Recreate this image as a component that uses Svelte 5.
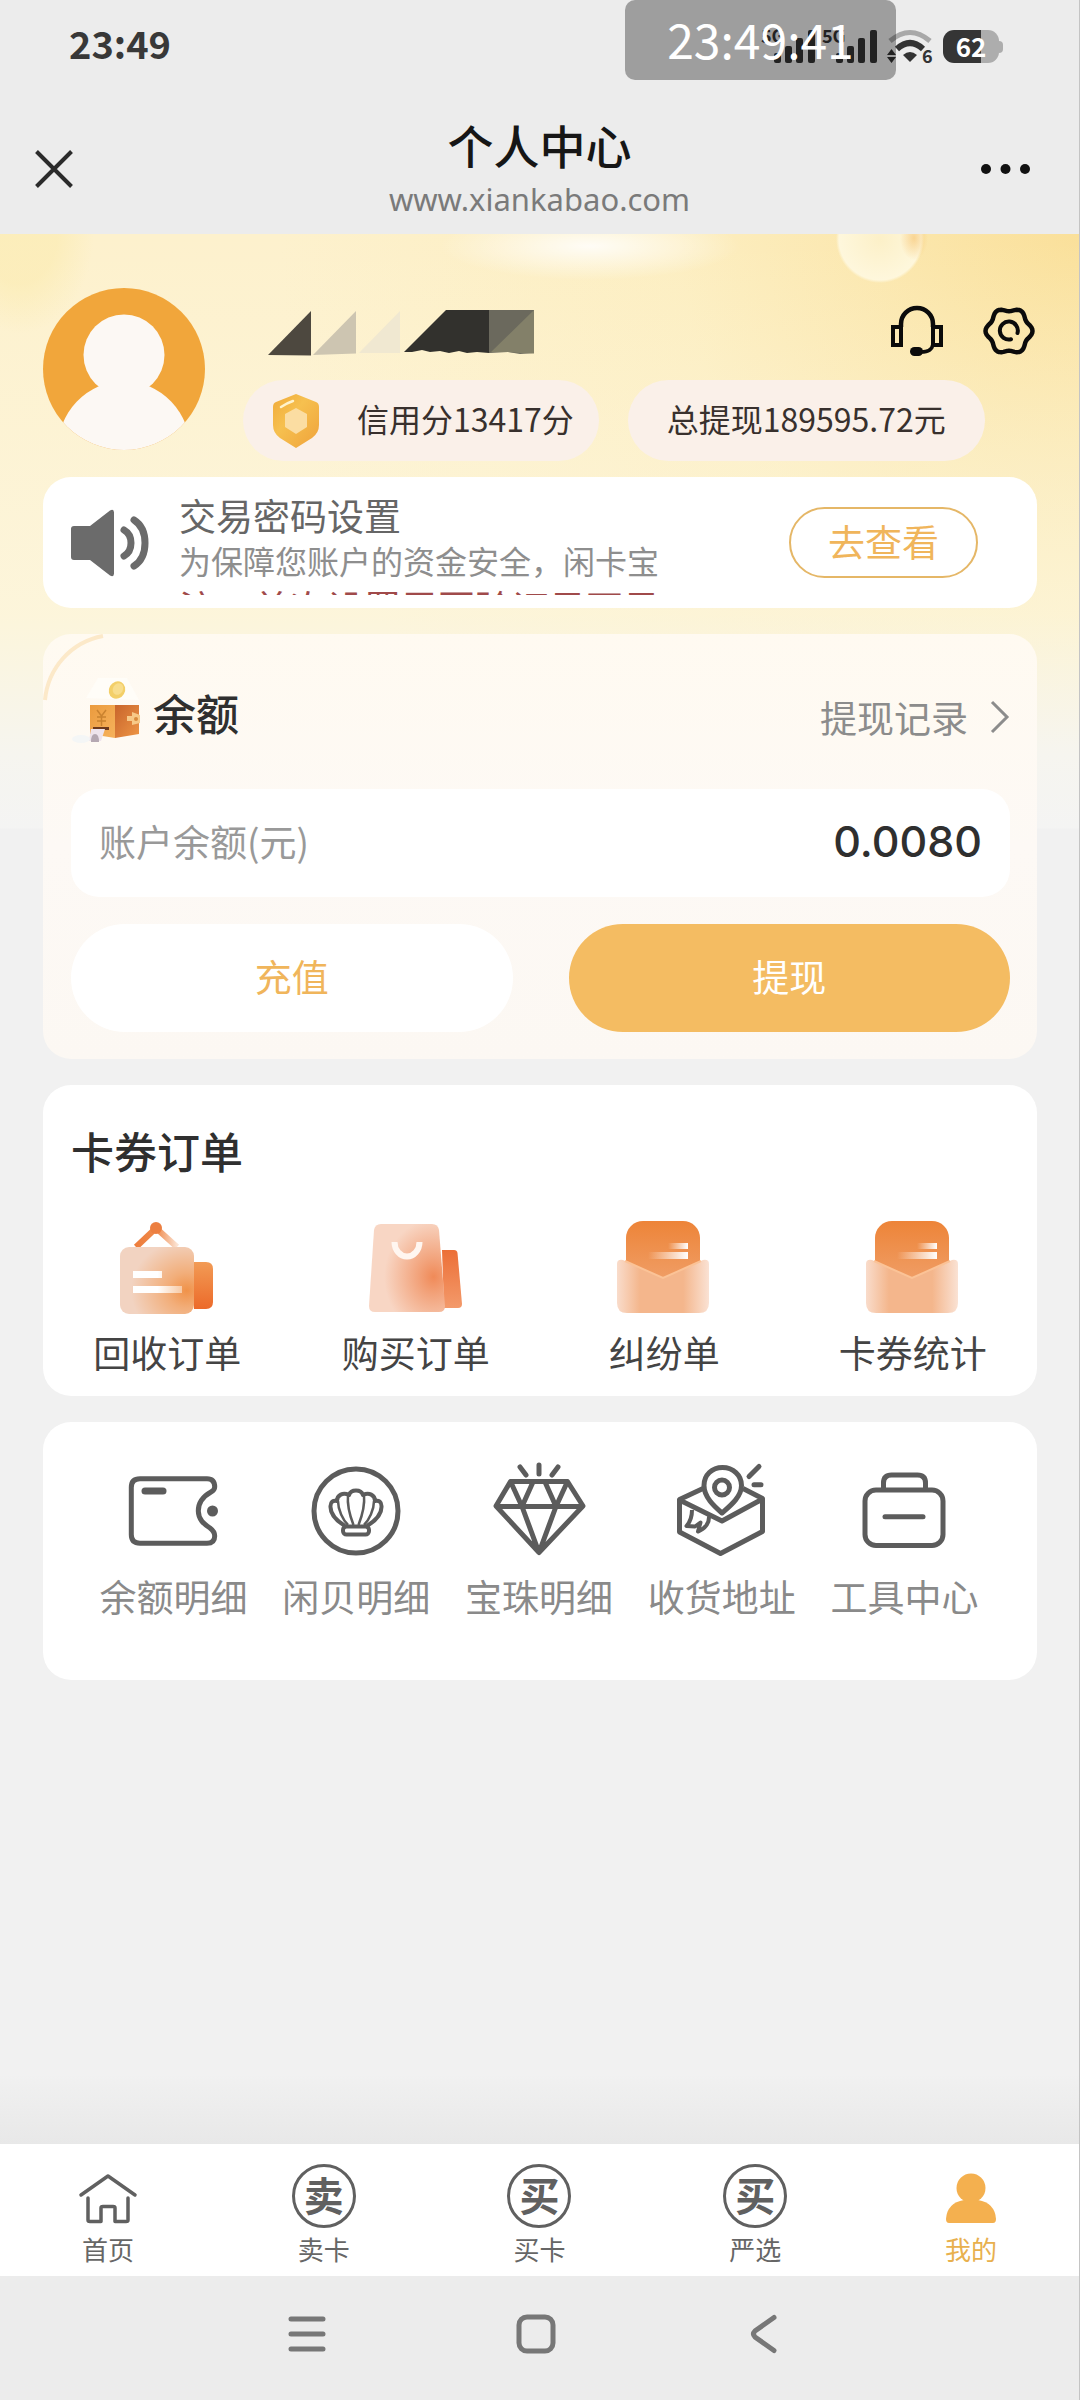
<script>
  const tools = [
    { id: 'wallet', label: '余额明细' },
    { id: 'shell', label: '闲贝明细' },
    { id: 'diamond', label: '宝珠明细' },
    { id: 'parcel', label: '收货地址' },
    { id: 'toolbox', label: '工具中心' }
  ];
  const orders = [
    { id: 'recycle', label: '回收订单' },
    { id: 'bag', label: '购买订单' },
    { id: 'letter', label: '纠纷单' },
    { id: 'letter', label: '卡券统计' }
  ];
  const tabs = [
    { id: 'home', label: '首页' },
    { id: 'glyph', glyph: '卖', label: '卖卡' },
    { id: 'glyph', glyph: '买', label: '买卡' },
    { id: 'glyph', glyph: '买', label: '严选' },
    { id: 'me', label: '我的', active: true }
  ];

  // six-lobed outline of the settings gear
  const gear =
    'M' +
    Array.from({ length: 72 }, (_, i) => {
      const t = (i / 72) * Math.PI * 2;
      const r = 21.6 + 1.9 * Math.cos(6 * t);
      return `${(26 + r * Math.cos(t)).toFixed(2)} ${(25 + r * Math.sin(t)).toFixed(2)}`;
    }).join('L') +
    'Z';
</script>

<div class="app">
  <header>
    <div class="status">
      <span class="time">23:49</span>
      <div class="indicators">
        <svg width="116" height="36" viewBox="0 0 116 36" fill="#333">
          <text x="0" y="15" class="net">5G</text>
          <text x="61" y="15" class="net">5G</text>
          <rect x="13" y="25" width="7" height="10" rx="2" /><rect x="24" y="18" width="7" height="17" rx="2" />
          <rect x="35" y="10" width="7" height="25" rx="2" /><rect x="47" y="2" width="7" height="33" rx="2" />
          <rect x="75" y="25" width="7" height="10" rx="2" /><rect x="86" y="18" width="7" height="17" rx="2" />
          <rect x="97" y="10" width="7" height="25" rx="2" /><rect x="109" y="2" width="7" height="33" rx="2" />
        </svg>
        <svg width="46" height="36" viewBox="0 0 46 36" fill="none">
          <path d="M0 27l4.500-6 4.500 6zM0 29l4.500 6 4.500-6z" fill="#333" />
          <path d="M3 13Q23-4 43 13" stroke="#a8a8a8" stroke-width="5" />
          <path d="M10 21Q23 9 36 21" stroke="#333" stroke-width="6" />
          <path d="M16 27q7-6 14 0l-7 7z" fill="#333" />
          <text x="35" y="35" class="six" fill="#333">6</text>
        </svg>
        <div class="battery"><span>62</span></div>
      </div>
      <div class="clock">23:49:41</div>
    </div>
    <div class="titlebar">
      <button class="bare" aria-label="关闭">
        <svg width="38" height="38" viewBox="0 0 38 38"><path d="M1.500 1.500l35 35M36.500 1.500l-35 35" stroke="#2b2b2b" stroke-width="4" /></svg>
      </button>
      <div class="titles">
        <h1>个人中心</h1>
        <p>www.xiankabao.com</p>
      </div>
      <button class="bare more" aria-label="更多">
        <svg width="49" height="38" viewBox="0 0 49 38" fill="#111"><circle cx="5" cy="19" r="5" /><circle cx="24.500" cy="19" r="5" /><circle cx="44" cy="19" r="5" /></svg>
      </button>
    </div>
  </header>

  <main>
    <section class="profile">
      <svg class="avatar" width="162" height="162" viewBox="0 0 162 162">
        <defs><clipPath id="av"><circle cx="81" cy="81" r="81" /></clipPath></defs>
        <g clip-path="url(#av)">
          <rect width="162" height="162" fill="#f1a63b" />
          <circle cx="81" cy="67" r="40.500" fill="#fcf8f4" />
          <ellipse cx="81" cy="164" rx="67" ry="71" fill="#fcf8f4" />
        </g>
      </svg>
      <div class="who">
        <div class="namerow">
          <svg width="267" height="46" viewBox="0 0 267 46">
            <path d="M0 45L43 1v44.500z" fill="#4d483f" />
            <path d="M45 45L88 1v42.500z" fill="#cdc5b1" />
            <path d="M91 43L132 1v42z" fill="#f0e8d1" />
            <path d="M136 42L178 0h43v43l-12-1-10 1-8-2-10 2-9-2-10 1-8-2-10 2z" fill="#32312d" />
            <path d="M221 0h45v43l-14 1-12-2-19 1z" fill="#6b695d" />
            <path d="M223 42L266 0v43.500l-14-.500-12-1z" fill="#838069" />
          </svg>
          <div class="actions">
            <button class="bare" aria-label="客服">
              <svg width="54" height="50" viewBox="0 0 54 50" fill="none" stroke="#0b0b0b" stroke-width="4.500">
                <path d="M11 21v-3a16 16 0 0 1 32 0v3" />
                <rect x="3" y="21" width="8" height="18" stroke-width="4" /><rect x="43" y="21" width="8" height="18" stroke-width="4" />
                <path d="M43 38q-1 8-12 8" stroke-width="3.500" />
                <rect x="20" y="41" width="13" height="9" rx="4.500" fill="#0b0b0b" stroke="none" />
              </svg>
            </button>
            <button class="bare" aria-label="设置">
              <svg width="52" height="50" viewBox="0 0 52 50" fill="none" stroke="#0b0b0b" stroke-width="4.500" stroke-linecap="round">
                <path d={gear} stroke-linejoin="round" />
                <path d="M34.500 27A9 9 0 1 0 28 33.300" stroke-width="4" />
              </svg>
            </button>
          </div>
        </div>
        <div class="badges">
          <span class="badge">
            <svg width="46" height="54" viewBox="0 0 46 54">
              <defs><linearGradient id="sh" x1="0" y1="0" x2="1" y2="1"><stop offset="0" stop-color="#f0aa38" /><stop offset=".4" stop-color="#f6c04f" /><stop offset="1" stop-color="#efa23a" /></linearGradient></defs>
              <path d="M23 0l20 8q3 1 3 5v18q0 8-7 13L23 54 7 44q-7-5-7-13V13q0-4 3-5z" fill="url(#sh)" />
              <path d="M8 13q6-4 12-6" stroke="#fff3cc" stroke-width="2.500" stroke-linecap="round" fill="none" />
              <path d="M23 14l11 6v13l-11 7-11-7V20z" fill="#fbdda2" />
            </svg>
            <span class="score">信用分13417分</span>
          </span>
          <span class="badge total"><span class="score">总提现189595.72元</span></span>
        </div>
      </div>
    </section>

    <section class="card notice">
      <svg width="78" height="68" viewBox="0 0 78 68" fill="none" stroke="#6b6b6b" stroke-linecap="round">
        <path d="M3 17h16L39 1.500q4-2 4 2v61q0 4-4 2L19 51H3q-3 0-3-3V20q0-3 3-3z" fill="#6b6b6b" stroke="none" />
        <path d="M53 21q7 4 7 13t-7 13" stroke-width="7" />
        <path d="M63 11q11 7 11 23T63 57" stroke-width="7" />
      </svg>
      <div class="message">
        <h2>交易密码设置</h2>
        <p>为保障您账户的资金安全，闲卡宝</p>
        <p class="warn">注：首次设置需要验证是否是</p>
      </div>
      <button class="view">去查看</button>
    </section>

    <section class="card balance">
      <svg class="arc" width="62" height="68" viewBox="0 0 62 68" fill="none"><path d="M2 66C5 34 28 8 60 2" stroke="#fce9c9" stroke-width="4" /></svg>
      <div class="balance-head">
        <div class="balance-name">
          <svg width="74" height="68" viewBox="0 0 74 68">
            <defs>
              <linearGradient id="wf" x1="0" y1="0" x2="1" y2="1"><stop offset="0" stop-color="#eb9b3e" /><stop offset="1" stop-color="#f6b25c" /></linearGradient>
              <linearGradient id="wr" x1="0" y1="0" x2="1" y2="1"><stop offset="0" stop-color="#c8642b" /><stop offset="1" stop-color="#ee9646" /></linearGradient>
            </defs>
            <path d="M15 20L27 0h29l12 22z" fill="#fffdf8" />
            <ellipse cx="46" cy="12" rx="8" ry="9" transform="rotate(30 46 12)" fill="#f3cf68" />
            <ellipse cx="47" cy="11" rx="5" ry="6" transform="rotate(30 47 11)" fill="#f8dd8c" />
            <path d="M19 27h25v33l-25-4z" fill="url(#wf)" />
            <path d="M44 27h24v29l-24 4z" fill="url(#wr)" />
            <path d="M26 32l4.500 6 4.500-6M30.500 38v10M26 39h9M26 43h9" stroke="#c9822f" stroke-width="1.500" fill="none" />
            <path d="M22 49h16v3H22z" fill="#6e3a1c" />
            <path d="M20 51h14l-4 12H18z" fill="#eee4ec" />
            <path d="M20 64q0-8 4-8t4 8z" fill="#b5a8b2" />
            <ellipse cx="10" cy="61" rx="9" ry="4" fill="#f4f6f6" />
            <path d="M56 38h5v-4l8 3v8l-8 2v-4h-5z" fill="#f7c987" />
            <circle cx="65" cy="41" r="2" fill="#d98b3c" />
          </svg>
          <h2>余额</h2>
        </div>
        <a href="#records">提现记录
          <svg width="20" height="34" viewBox="0 0 20 34" fill="none"><path d="M2 2l15 15L2 32" stroke="#8c8c8c" stroke-width="3" /></svg>
        </a>
      </div>
      <div class="amount"><span>账户余额(元)</span><strong>0.0080</strong></div>
      <div class="buttons">
        <button class="light">充值</button>
        <button class="solid">提现</button>
      </div>
    </section>

    <section class="card orders">
      <h2>卡券订单</h2>
      <div class="grid four">
        {#each orders as item, i}
          <a href="#order{i}">
            <svg width="96" height="96" viewBox="0 0 96 96">
              {#if item.id === 'recycle'}
                <defs>
                  <linearGradient id="r1" x1="0" y1="0" x2="0" y2="1"><stop offset="0" stop-color="#f29b55" /><stop offset="1" stop-color="#ec6a2a" /></linearGradient>
                  <radialGradient id="r2" cx=".9" cy=".65" r=".75"><stop offset="0" stop-color="#f09249" /><stop offset=".35" stop-color="#f2ae7a" /><stop offset="1" stop-color="#f2d3c1" /></radialGradient>
                  <linearGradient id="r3"><stop offset="0" stop-color="#fff" /><stop offset=".5" stop-color="#fff" /><stop offset="1" stop-color="#f7c9a4" /></linearGradient>
                  <linearGradient id="r4"><stop offset="0" stop-color="#ed7d3c" /><stop offset=".5" stop-color="#ef8a4c" /><stop offset="1" stop-color="#fbe3d3" /></linearGradient>
                </defs>
                <path d="M17 27L37 8l21 19" fill="none" stroke="url(#r4)" stroke-width="6" />
                <circle cx="37" cy="8" r="6" fill="#ec7f41" />
                <path d="M75 42h12q7 0 7 7v33q0 7-7 7H75z" fill="url(#r1)" />
                <rect x="1" y="27" width="74" height="67" rx="9" fill="url(#r2)" />
                <path d="M14 51h29v7H14zM14 66h49v7H14z" fill="url(#r3)" />
              {:else if item.id === 'bag'}
                <defs>
                  <linearGradient id="b1" x1="0" y1="0" x2="0" y2="1"><stop offset="0" stop-color="#ec6f37" /><stop offset="1" stop-color="#f39a6b" /></linearGradient>
                  <radialGradient id="b2" cx=".85" cy=".6" r=".65"><stop offset="0" stop-color="#f08a58" /><stop offset=".3" stop-color="#f2a27a" /><stop offset="1" stop-color="#f8d6c4" /></radialGradient>
                </defs>
                <path d="M74 30h12q3 0 3.500 3L94 84q0 4-4 4H76z" fill="url(#b1)" />
                <path d="M13 4h51q6 0 7 6l6 76q0 6-6 6H7q-6 0-6-6L6 10q1-6 7-6z" fill="url(#b2)" />
                <path d="M26.500 22a12.500 14.500 0 0 0 25 0" fill="none" stroke="#fff6f0" stroke-width="6" />
              {:else}
                <defs>
                  <linearGradient id="l1" x1="0" y1="0" x2="0" y2="1"><stop offset="0" stop-color="#ed8438" /><stop offset="1" stop-color="#f0a06a" /></linearGradient>
                  <linearGradient id="l2"><stop offset="0" stop-color="#f9dccb" /><stop offset=".25" stop-color="#f4b68c" /><stop offset=".72" stop-color="#f4b68c" /><stop offset="1" stop-color="#fae2d4" /></linearGradient>
                  <linearGradient id="l3"><stop offset="0" stop-color="#fff" stop-opacity="0" /><stop offset="1" stop-color="#fff" /></linearGradient>
                </defs>
                <rect x="10" y="1" width="74" height="64" rx="17" fill="url(#l1)" />
                <rect x="52" y="23" width="20" height="6" fill="url(#l3)" /><rect x="32" y="32" width="40" height="7" fill="url(#l3)" />
                <path d="M1 44q0-5 6-4l40 18 40-18q6-1 6 4v39q0 10-10 10H11q-10 0-10-10z" fill="url(#l2)" />
                <path d="M9 41l38 17 38-17" fill="none" stroke="#fbc397" stroke-width="2" />
              {/if}
            </svg>
            <span>{item.label}</span>
          </a>
        {/each}
      </div>
    </section>

    <section class="card grid five">
      {#each tools as item}
        <a href="#{item.id}">
          <svg width="92" height="92" viewBox="0 0 92 92" fill="none" stroke="#5c5c5c" stroke-width="5" stroke-linejoin="round">
            {#if item.id === 'wallet'}
              <path d="M13 14.700H80Q87.700 14.700 87.700 23 87.700 26 84 28C75 33 71.300 40 71.300 47 71.500 56 77 60 83 64 87 67 87.700 69 87.700 72Q87.700 79.300 80 79.300H13Q4.300 79.300 4.300 70.600V23.400Q4.300 14.700 13 14.700Z" />
              <path d="M18 27h18" stroke-width="7" stroke-linecap="round" />
              <circle cx="85.500" cy="47" r="5.500" fill="#5c5c5c" stroke="none" />
            {:else if item.id === 'shell'}
              <circle cx="46" cy="47" r="42" />
              <path d="M35 62C27 57 20 50 20.500 42 20.500 38 23 36 27 37 27 31 33 28 39 31 41 25 51 25 53 31 59 28 65 31 65 37 69 36 71.500 38 71.500 42 72 50 65 57 57 62" stroke-width="4" />
              <path d="M28 37C28 46 33 56 38 61M38 31C37 41 40 52 43.500 61M54 31C55 41 52 52 48.500 61M64 37C64 46 59 56 54 61" stroke-width="2.500" />
              <rect x="33" y="62.500" width="26" height="8" rx="3.500" stroke-width="4" />
            {:else if item.id === 'diamond'}
              <path d="M17.500 17.500H74.500L90 42 46 88.500 3 42ZM3 42.500H90M17.500 17.500L29 42.500 46 88.500 63 42.500 74.500 17.500M40 18L29 42.500M52 18L63 42.500" />
              <path d="M27 3l6 8M46 1v9M65 3l-6 8" stroke-linecap="round" />
            {:else if item.id === 'parcel'}
              <path d="M27 24.500L3.500 35.500V68L44.500 89.500 86.500 67.500V34.500L67 24.500M3.500 36L46 57 86.500 35" />
              <path d="M46 49C38 42 28 33 28 21.500 28 11 36 3.500 46.500 3.500S65.500 11 65.500 21.500C65.500 33 54 42 46 49Z" fill="#fff" />
              <circle cx="46" cy="23.500" r="7.500" />
              <path d="M16 46C16 53 14 58 10.500 62L19 62.500 24.500 58.500 22 67.500C29 65 33.500 59 33 52" stroke-width="4" />
              <path d="M83 2.500L73 12.500M78 20.700h7" stroke-linecap="round" />
            {:else}
              <rect x="6" y="26" width="78" height="55.500" rx="11" />
              <path d="M24.500 26v-7q0-8 8-8h26q8 0 8 8v7" />
              <path d="M26 52.700h38" stroke-linecap="round" />
            {/if}
          </svg>
          <span>{item.label}</span>
        </a>
      {/each}
    </section>
  </main>

  <nav class="tabs">
    {#each tabs as tab}
      <a href="#{tab.label}" class:active={tab.active}>
        {#if tab.id === 'glyph'}
          <b class="ring">{tab.glyph}</b>
        {:else if tab.id === 'home'}
          <svg width="64" height="64" viewBox="0 0 64 64" fill="none" stroke="#606060" stroke-width="3.500" stroke-linecap="round" stroke-linejoin="round">
            <path d="M5 31L32 12l27 19" /><path d="M12 34v22q0 1.500 2 1.500h11V44q0-1.500 2-1.500h10q2 0 2 1.500v13.500h11q2 0 2-1.500V34" />
          </svg>
        {:else}
          <svg width="64" height="64" viewBox="0 0 64 64" fill="#f4b04f">
            <circle cx="32" cy="24" r="14.500" /><path d="M25 36h14q17 3 18 19 0 4-3 4H10q-3 0-3-4 1-16 18-19z" />
          </svg>
        {/if}
        <span>{tab.label}</span>
      </a>
    {/each}
  </nav>

  <footer>
    <button class="bare" aria-label="最近任务"><svg width="38" height="38" viewBox="0 0 38 38"><path d="M3 4h32M3 19h32M3 34h32" /></svg></button>
    <button class="bare" aria-label="主屏幕"><svg width="38" height="38" viewBox="0 0 38 38"><rect x="2" y="2" width="34" height="34" rx="8" /></svg></button>
    <button class="bare" aria-label="返回"><svg width="38" height="38" viewBox="0 0 38 38"><path d="M28 2.500L9 16q-3 3 0 6l19 13.500" /></svg></button>
  </footer>
</div>

<style>
  :global(body) { margin: 0; background: #f1f1f1; }
  .app {
    min-height: 100vh;
    display: flex;
    flex-direction: column;
    box-sizing: border-box;
    border-right: 1px solid #c4c4c4;
    font-family: "Noto Sans CJK SC", sans-serif;
    background: #f1f1f1;
  }
  h1, h2, p { margin: 0; }
  button { font-family: inherit; cursor: pointer; }
  a { text-decoration: none; color: inherit; }
  svg { display: block; flex: none; overflow: visible; }
  .bare { border: 0; background: none; padding: 0; }

  header { background: #ececec; height: 234px; }
  .status {
    position: relative;
    display: flex;
    align-items: center;
    justify-content: space-between;
    height: 92px;
    padding: 0 74px 0 69px;
  }
  .time { font-size: 38px; font-weight: 700; line-height: 40px; padding-bottom: 6px; color: #383838; }
  .indicators { display: flex; align-items: center; gap: 10px; }
  .net { font-size: 18px; font-weight: 700; }
  .six { font-size: 18px; font-weight: 700; }
  .battery {
    position: relative;
    width: 56px;
    height: 33px;
    margin-right: 6px;
    border-radius: 11px;
    background: linear-gradient(90deg, #353535 38px, #adadad 38px);
    color: #fff;
    font-size: 26px;
    font-weight: 700;
    line-height: 31px;
    text-align: center;
  }
  .battery::after {
    content: "";
    position: absolute;
    left: 100%;
    top: 11px;
    width: 4px;
    height: 12px;
    border-radius: 0 4px 4px 0;
    background: #adadad;
  }
  .clock {
    position: absolute;
    top: 0;
    right: 183px;
    width: 271px;
    height: 80px;
    border-radius: 10px;
    background: rgba(0, 0, 0, 0.33);
    color: #fff;
    font-size: 48px;
    line-height: 76px;
    text-align: center;
  }
  .titlebar { display: grid; grid-template-columns: 1fr auto 1fr; align-items: center; justify-items: start; padding: 22px 35px 0; }
  .more { justify-self: end; margin-right: 14px; }
  .titles { text-align: center; }
  h1 { font-size: 46px; font-weight: 500; line-height: 60px; color: #161616; }
  .titles p { font-family: "Noto Sans", sans-serif; font-size: 31px; line-height: 50px; color: #7a7a7a; }

  main {
    flex: 1;
    display: flex;
    flex-direction: column;
    padding: 54px 42px 0 43px;
    background:
      radial-gradient(ellipse 14px 22px at 914px 4px, rgba(246, 190, 100, 0.6), rgba(246, 200, 120, 0)) no-repeat,
      radial-gradient(ellipse 150px 34px at 590px 12px, rgba(255, 255, 255, 0.85), rgba(255, 255, 255, 0)) no-repeat,
      radial-gradient(circle at 880px 5px, #fcf0c8 0, #fef7dc 41px, rgba(254, 247, 220, 0) 44px) no-repeat,
      radial-gradient(ellipse 74px 100px at 20px 0, rgba(250, 232, 160, 0.4) 50%, rgba(250, 232, 160, 0)) no-repeat,
      linear-gradient(180deg, rgba(243, 243, 242, 0) 0, rgba(252, 249, 232, 0.5) 380px, #f6f5ef 520px, #f4f4f3 594px, #f1f1f1 595px, #f1f1f1 1700px, #f1f1f1 calc(100% - 70px), #e8e8e8 100%) no-repeat,
      radial-gradient(circle 800px at 100% 0, #fae09a 0, rgba(252, 235, 180, 0.5) 50%, rgba(253, 240, 200, 0)) no-repeat,
      #fdf1cd;
  }
  .profile { display: flex; gap: 38px; }
  .who { flex: 1; }
  .namerow { display: flex; justify-content: space-between; margin: 18px 0 24px 25px; height: 50px; align-items: flex-end; }
  .actions { display: flex; gap: 39px; padding-right: 2px; }
  .badges { display: flex; gap: 29px; }
  .badge {
    display: flex;
    align-items: center;
    box-sizing: border-box;
    height: 81px;
    padding: 0 25px 0 30px;
    gap: 38px;
    border-radius: 41px;
    background: #faf0e9;
    color: #38302d;
    font-size: 32px;
    line-height: 40px;
  }
  .total { padding: 0 39px; }
  .score { padding-bottom: 5px; }

  .card { border-radius: 28px; background: #fff; margin-bottom: 26px; }
  .notice { display: flex; align-items: center; height: 131px; margin-top: 16px; padding: 0 59px 0 28px; }
  .message { flex: 1; margin-left: 30px; height: 104px; overflow: hidden; }
  .message h2 { font-size: 37px; font-weight: 400; line-height: 48px; color: #666; }
  .message p { font-size: 32px; line-height: 42px; color: #8e8e8e; white-space: nowrap; }
  .message .warn { font-size: 37px; line-height: 52px; color: #a04a4a; width: 485px; overflow: hidden; }
  .view {
    width: 189px;
    height: 71px;
    padding: 0 0 4px;
    border: 2px solid #e5b767;
    border-radius: 36px;
    background: #fff;
    color: #f0b55b;
    font-size: 37px;
    line-height: 60px;
  }

  .balance { position: relative; padding: 37px 27px 27px 28px; background: linear-gradient(180deg, #fffaf1, #fdf9f5 50%, #fcf8f3); }
  .arc { position: absolute; left: 0; top: 0; }
  .balance-head { display: flex; justify-content: space-between; align-items: center; height: 92px; margin-bottom: 26px; }
  .balance-name { display: flex; align-items: center; gap: 8px; padding-bottom: 10px; }
  h2 { font-size: 43px; font-weight: 500; line-height: 56px; color: #2f2f2f; }
  .balance-head a { display: flex; align-items: center; gap: 22px; font-size: 37px; line-height: 48px; color: #8c8c8c; }
  .amount {
    display: flex;
    align-items: center;
    justify-content: space-between;
    box-sizing: border-box;
    height: 108px;
    padding: 0 28px 5px;
    border-radius: 28px;
    background: #fff;
    font-size: 37px;
    line-height: 48px;
    color: #999;
  }
  .amount strong { font-family: Inter, sans-serif; font-size: 43px; font-weight: 500; color: #2f2f2f; }
  .buttons { display: grid; grid-template-columns: 1fr 1fr; gap: 56px; margin-top: 27px; }
  .buttons button { height: 108px; padding: 0 0 5px; border: 0; border-radius: 54px; font-size: 37px; }
  .light { background: #fff; color: #f0b55b; }
  .solid { background: #f4bc62; color: #fff; }

  .grid { display: grid; }
  .grid a { display: flex; flex-direction: column; align-items: center; font-size: 37px; line-height: 48px; }
  .orders { padding: 37px 0 20px; }
  .orders h2 { margin: 0 28px 42px; }
  .four { grid-template-columns: repeat(4, 1fr); }
  .four a { color: #444; gap: 12px; }
  .five { grid-template-columns: repeat(5, 1fr); padding: 42px 41px 60px 39px; }
  .five a { color: #8a8a8a; gap: 16px; }

  .tabs { display: grid; grid-template-columns: repeat(5, 1fr); height: 132px; background: #fff; }
  .tabs a { display: flex; flex-direction: column; align-items: center; padding-top: 20px; gap: 4px; font-size: 26px; line-height: 34px; color: #666; }
  .tabs .active { color: #e8b04e; }
  .ring {
    width: 64px;
    height: 64px;
    box-sizing: border-box;
    border: 3px solid #606060;
    border-radius: 50%;
    font-size: 40px;
    line-height: 54px;
    text-align: center;
    color: #606060;
  }

  footer { display: flex; justify-content: center; gap: 191px; height: 124px; padding: 0 8px 8px 0; align-items: center; background: #ececec; box-sizing: border-box; }
  footer svg { fill: none; stroke: #777; stroke-width: 5; stroke-linecap: round; }
</style>
